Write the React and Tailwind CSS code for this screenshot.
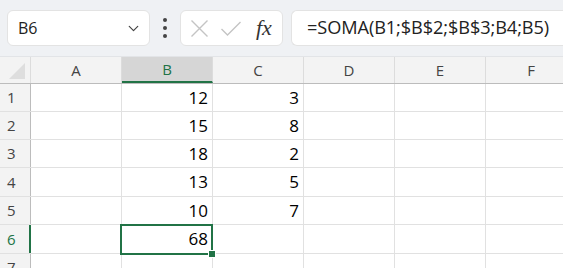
import { ChevronDown } from 'lucide-react';

const cols = [
  { name: 'A', w: 'w-[91px]' },
  { name: 'B', w: 'w-[91px]' },
  { name: 'C', w: 'w-[91px]' },
  { name: 'D', w: 'w-[91px]' },
  { name: 'E', w: 'w-[91px]' },
  { name: 'F', w: 'w-[91px]' },
];

const rows = [
  { n: 1, h: 'h-[28px]', b: '12', c: '3' },
  { n: 2, h: 'h-[28px]', b: '15', c: '8' },
  { n: 3, h: 'h-[28px]', b: '18', c: '2' },
  { n: 4, h: 'h-[29px]', b: '13', c: '5' },
  { n: 5, h: 'h-[28px]', b: '10', c: '7' },
  { n: 6, h: 'h-[29px]', b: '68', c: '' },
  { n: 7, h: 'h-[28px]', b: '', c: '' },
];

const App = () => {
  return (
    <div className="w-[563px] h-[268px] overflow-hidden bg-white font-['Open_Sans',sans-serif]">
      {/* Formula bar */}
      <div className="h-[57px] bg-[#eff1f4] border-b border-[#e2e4e7] flex items-start pt-[10px] pl-[7px]">
        <div className="w-[143px] h-[36px] bg-white rounded-md border border-[#e3e3e3] flex items-center justify-between pl-[10px] pr-[7px]">
          <span className="text-[16px] text-[#222]">B6</span>
          <ChevronDown size={17} strokeWidth={1.7} className="text-[#444]" />
        </div>
        <div className="w-[30px] h-[36px] flex flex-col items-center justify-center gap-[4px]">
          <span className="w-[4px] h-[4px] rounded-full bg-[#444]" />
          <span className="w-[4px] h-[4px] rounded-full bg-[#444]" />
          <span className="w-[4px] h-[4px] rounded-full bg-[#444]" />
        </div>
        <div className="w-[103px] h-[36px] bg-white rounded-md border border-[#e3e3e3] flex items-center pl-[9px]">
          <svg width="19" height="19" viewBox="0 0 19 19" className="mr-[11px]">
            <path d="M1.5 1.5 L17.5 17.5 M17.5 1.5 L1.5 17.5" stroke="#c4c4c4" strokeWidth="1.4" fill="none" />
          </svg>
          <svg width="22" height="17" viewBox="0 0 22 17" className="mr-[14px]">
            <path d="M1.5 9 L7.5 15 L20.5 2" stroke="#c4c4c4" strokeWidth="1.4" fill="none" />
          </svg>
          <span className="font-['Liberation_Serif',serif] italic text-[22px] text-[#333] leading-none">fx</span>
        </div>
        <div className="ml-[8px] flex-1 h-[36px] bg-white rounded-l-md border border-r-0 border-[#e3e3e3] flex items-center pl-[15px]">
          <span className="text-[18.2px] text-[#222] tracking-[-0.1px]">=SOMA(B1;$B$2;$B$3;B4;B5)</span>
        </div>
      </div>

      {/* Grid */}
      <div className="flex flex-col">
        <div className="flex h-[27px] bg-[#f3f3f3] border-b border-[#bcbcbc]">
          <div className="w-[31px] shrink-0 border-r border-[#dcdcdc] relative">
            <div className="absolute right-[5px] bottom-[4px] w-0 h-0 border-l-[16px] border-l-transparent border-b-[16px] border-b-[#dedede]" />
          </div>
          {cols.map((c) => (
            <div
              key={c.name}
              className={`${c.w} shrink-0 border-r border-[#dcdcdc] flex items-center justify-center text-[15px] ${
                c.name === 'B' ? 'bg-[#d6d6d6] text-[#217346] border-b-2 border-b-[#217346]' : 'text-[#444]'
              }`}
            >
              {c.name}
            </div>
          ))}
        </div>
        {rows.map((r) => (
          <div key={r.n} className={`flex ${r.h} border-b border-[#e1e1e1]`}>
            <div
              className={`w-[31px] shrink-0 bg-[#f3f3f3] flex items-center pl-[7px] text-[15px] ${
                r.n === 6 ? 'text-[#217346] border-r-2 border-r-[#217346] bg-[#e8e8e8]' : 'text-[#444] border-r border-[#bcbcbc]'
              }`}
            >
              {r.n}
            </div>
            {cols.map((c) => {
              const val = c.name === 'B' ? r.b : c.name === 'C' ? r.c : '';
              const selected = r.n === 6 && c.name === 'B';
              return (
                <div
                  key={c.name}
                  className={`w-[91px] shrink-0 border-r border-[#e1e1e1] flex items-center justify-end pr-[4px] text-[17px] text-black relative ${selected ? 'z-10' : ''}`}
                >
                  {val}
                  {selected && (
                    <>
                      <div className="absolute -left-[2px] -top-[1px] -right-[1px] -bottom-[2px] border-2 border-[#217346]" />
                      <div className="absolute -right-[4px] -bottom-[5px] w-[8px] h-[8px] bg-[#217346] border border-white" />
                    </>
                  )}
                </div>
              );
            })}
          </div>
        ))}
      </div>
    </div>
  );
};

export default App;
